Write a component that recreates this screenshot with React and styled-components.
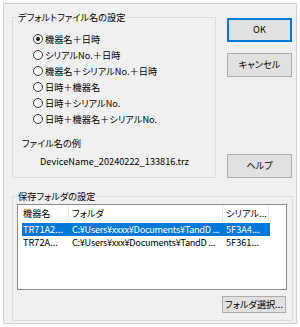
import styled, { createGlobalStyle } from "styled-components";

const GlobalStyle = createGlobalStyle`
  html, body {
    margin: 0;
    padding: 0;
    background: #ffffff;
  }
  body {
    font-family: "Noto Sans CJK JP", "Noto Sans", sans-serif;
    font-size: 9.2px;
    color: #000000;
    font-feature-settings: "palt" 1;
  }
`;

const Page = styled.div`
  padding: 3px 0 0 3px;
`;

const Dialog = styled.div`
  width: 294px;
  height: 321px;
  box-sizing: border-box;
  border: 1px solid #d0d0d0;
  background: #f0f0f0;
  padding: 7px 3px 1px 8px;
  display: flex;
  flex-direction: column;
  gap: 12px;
`;

const TopRow = styled.div`
  display: flex;
  gap: 11px;
`;

const Group = styled.fieldset`
  margin: 0;
  min-width: 0;
  box-sizing: border-box;
  width: ${(p) => p.$width}px;
  border: 1px solid #dcdcdc;
  padding: ${(p) => p.$pad};
  display: flex;
  flex-direction: column;
  align-items: flex-start;
`;

const Legend = styled.legend`
  padding: 0 2px;
  line-height: 12px;
  height: 12px;
`;

const RadioList = styled.div`
  margin-left: 17px;
  display: flex;
  flex-direction: column;
`;

const RadioRow = styled.label`
  display: flex;
  align-items: center;
  height: 16px;
  line-height: 16px;
  white-space: nowrap;
`;

const RadioCircle = styled.span`
  width: 10px;
  height: 10px;
  box-sizing: border-box;
  border: 1px solid #333333;
  border-radius: 50%;
  background: #ffffff;
  margin-right: 2px;
  display: flex;
  align-items: center;
  justify-content: center;
  flex-shrink: 0;

  &::after {
    content: "";
    width: 4px;
    height: 4px;
    border-radius: 50%;
    background: ${(p) => (p.$checked ? "#1a1a1a" : "transparent")};
  }
`;

const Caption = styled.div`
  margin: 10px 0 0 6px;
  line-height: 12px;
`;

const Example = styled.div`
  margin: 6px 0 0 24px;
  line-height: 12px;
  white-space: nowrap;
`;

const ButtonColumn = styled.div`
  width: 65px;
  padding-top: 7px;
  display: flex;
  flex-direction: column;
  gap: 11px;
`;

const Button = styled.button`
  font: inherit;
  color: #000000;
  width: ${(p) => p.$width || 65}px;
  height: ${(p) => p.$height || 24}px;
  padding: 0;
  box-sizing: border-box;
  background: #e1e1e1;
  border: 1px solid ${(p) => (p.$default ? "#0078d7" : "#adadad")};
  box-shadow: ${(p) => (p.$default ? "inset 0 0 0 1px #0078d7" : "none")};
  line-height: 1;
  white-space: nowrap;

  &:last-child {
    margin-top: ${(p) => (p.$bottom ? "auto" : "0")};
  }
`;

const ListBox = styled.div`
  margin-left: 1px;
  width: 270px;
  height: 86px;
  box-sizing: border-box;
  border: 1px solid #8c8c8c;
  background: #ffffff;
  display: flex;
  flex-direction: column;
`;

const HeaderRow = styled.div`
  display: flex;
  height: 17px;
  line-height: 17px;
`;

const HeaderCell = styled.div`
  width: ${(p) => p.$width}px;
  padding-left: ${(p) => p.$pad}px;
  box-sizing: border-box;
  border-right: 1px solid #e5e5e5;
  white-space: nowrap;
  overflow: hidden;
`;

const Row = styled.div`
  display: flex;
  margin-left: 4px;
  width: 248px;
  height: 13px;
  line-height: 13px;
  background: ${(p) => (p.$selected ? "#0078d7" : "transparent")};
  color: ${(p) => (p.$selected ? "#ffffff" : "#000000")};
  margin-top: ${(p) => (p.$first ? "1px" : "0")};
`;

const Cell = styled.div`
  width: ${(p) => p.$width}px;
  padding-left: ${(p) => p.$pad}px;
  box-sizing: border-box;
  white-space: nowrap;
  overflow: hidden;
  letter-spacing: ${(p) => p.$tight || 0}px;
`;

const FolderButtonRow = styled.div`
  width: 271px;
  display: flex;
  justify-content: flex-end;
  margin-top: 6px;
  padding-right: 1px;
  box-sizing: border-box;
`;

const nameOptions = [
  "機器名＋日時",
  "シリアルNo.＋日時",
  "機器名＋シリアルNo.＋日時",
  "日時＋機器名",
  "日時＋シリアルNo.",
  "日時＋機器名＋シリアルNo.",
];

const folders = [
  { name: "TR71A2...", path: "C:¥Users¥xxxx¥Documents¥TandD ...", serial: "5F3A4...", selected: true },
  { name: "TR72A...", path: "C:¥Users¥xxx¥Documents¥TandD ...", serial: "5F361..." },
];

const App = () => {
  return (
    <Page>
      <GlobalStyle />
      <Dialog>
        <TopRow>
          <Group $width={204} $pad="8px 3px 10px 3px">
            <Legend>デフォルトファイル名の設定</Legend>
            <RadioList>
              {nameOptions.map((opt, i) => (
                <RadioRow key={opt}>
                  <RadioCircle $checked={i === 0} />
                  {opt}
                </RadioRow>
              ))}
            </RadioList>
            <Caption>ファイル名の例</Caption>
            <Example>DeviceName_20240222_133816.trz</Example>
          </Group>
          <ButtonColumn>
            <Button $default>OK</Button>
            <Button>キャンセル</Button>
            <Button $bottom>ヘルプ</Button>
          </ButtonColumn>
        </TopRow>
        <Group $width={281} $pad="2px 3px 7px 3px">
          <Legend>保存フォルダの設定</Legend>
          <ListBox>
            <HeaderRow>
              <HeaderCell $width={51} $pad={5}>機器名</HeaderCell>
              <HeaderCell $width={154} $pad={3}>フォルダ</HeaderCell>
              <HeaderCell $width={46} $pad={3}>シリアル...</HeaderCell>
            </HeaderRow>
            {folders.map((f, i) => (
              <Row key={f.name} $selected={f.selected} $first={i === 0}>
                <Cell $width={46} $pad={1}>{f.name}</Cell>
                <Cell $width={154} $pad={4} $tight={-0.3}>{f.path}</Cell>
                <Cell $width={48} $pad={4}>{f.serial}</Cell>
              </Row>
            ))}
          </ListBox>
          <FolderButtonRow>
            <Button $width={64} $height={17}>フォルダ選択...</Button>
          </FolderButtonRow>
        </Group>
      </Dialog>
    </Page>
  );
};

export default App;
